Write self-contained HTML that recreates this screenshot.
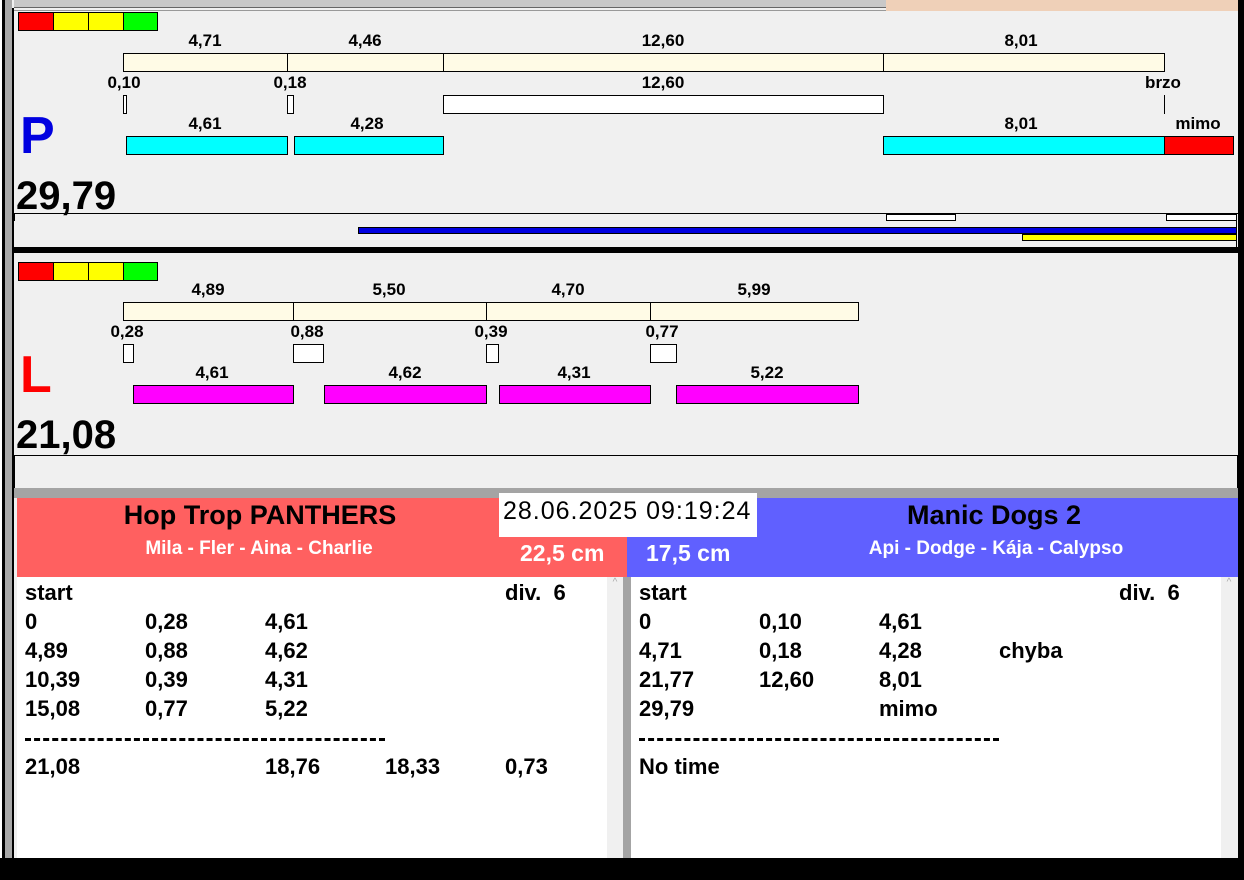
<!DOCTYPE html>
<html><head><meta charset="utf-8"><style>
*{margin:0;padding:0;box-sizing:border-box}
body{width:1244px;height:880px;background:#000;position:relative;overflow:hidden;font-family:"Liberation Sans",Arial,sans-serif}
div{position:absolute}
.t{font-weight:bold;font-size:17px;color:#000;transform:translateX(-50%);white-space:nowrap;line-height:17px}
.b{border:1px solid #000}
.r{font-weight:bold;font-size:22px;line-height:24px;color:#000;white-space:nowrap}
</style></head><body>
<div style="left:0;top:0;width:2px;height:858px;background:#fff"></div>
<div style="left:5px;top:0;width:8px;height:858px;background:#a8a8a8"></div>
<div style="left:12px;top:0;width:1226px;height:858px;background:#f0f0f0"></div>
<div style="left:12px;top:8px;width:2px;height:850px;background:#000"></div>
<div style="left:14px;top:0;width:872px;height:8px;background:#c8c8c8;border-bottom:1px solid #666"></div>
<div style="left:886px;top:0;width:352px;height:11px;background:#efd0b8"></div>
<div style="left:14px;top:10px;width:872px;height:1px;background:#999"></div>
<!-- P section -->
<div class="b" style="left:18px;top:12px;width:36px;height:19px;background:#f00"></div>
<div class="b" style="left:53px;top:12px;width:36px;height:19px;background:#ff0"></div>
<div class="b" style="left:88px;top:12px;width:36px;height:19px;background:#ff0"></div>
<div class="b" style="left:123px;top:12px;width:35px;height:19px;background:#0f0"></div>
<div class="t" style="left:205px;top:32px">4,71</div>
<div class="t" style="left:365px;top:32px">4,46</div>
<div class="t" style="left:663px;top:32px">12,60</div>
<div class="t" style="left:1021px;top:32px">8,01</div>
<div class="b" style="left:123px;top:53px;width:165px;height:19px;background:#fffbe6"></div>
<div class="b" style="left:287px;top:53px;width:157px;height:19px;background:#fffbe6"></div>
<div class="b" style="left:443px;top:53px;width:441px;height:19px;background:#fffbe6"></div>
<div class="b" style="left:883px;top:53px;width:282px;height:19px;background:#fffbe6"></div>
<div class="t" style="left:124px;top:74px">0,10</div>
<div class="t" style="left:290px;top:74px">0,18</div>
<div class="t" style="left:663px;top:74px">12,60</div>
<div class="t" style="left:1163px;top:74px">brzo</div>
<div class="b" style="left:123px;top:95px;width:4px;height:19px;background:#fff"></div>
<div class="b" style="left:287px;top:95px;width:7px;height:19px;background:#fff"></div>
<div class="b" style="left:443px;top:95px;width:441px;height:19px;background:#fff"></div>
<div style="left:1164px;top:95px;width:1px;height:19px;background:#000"></div>
<div style="left:20px;top:108px;font-size:52px;font-weight:bold;color:#0000e0;line-height:56px">P</div>
<div class="t" style="left:205px;top:115px">4,61</div>
<div class="t" style="left:367px;top:115px">4,28</div>
<div class="t" style="left:1021px;top:115px">8,01</div>
<div class="t" style="left:1198px;top:115px">mimo</div>
<div class="b" style="left:126px;top:136px;width:162px;height:19px;background:#0ff"></div>
<div class="b" style="left:294px;top:136px;width:150px;height:19px;background:#0ff"></div>
<div class="b" style="left:883px;top:136px;width:282px;height:19px;background:#0ff"></div>
<div class="b" style="left:1164px;top:136px;width:70px;height:19px;background:#f00"></div>
<div style="left:16px;top:174px;font-size:40px;font-weight:bold;line-height:44px">29,79</div>
<div style="left:14px;top:213px;width:1224px;height:1px;background:#000"></div>
<div style="left:14px;top:213px;width:1px;height:8px;background:#000"></div>
<div class="b" style="left:886px;top:214px;width:70px;height:7px;background:#fff"></div>
<div class="b" style="left:1166px;top:214px;width:71px;height:7px;background:#fff"></div>
<div class="b" style="left:358px;top:227px;width:879px;height:7px;background:#0000e0"></div>
<div class="b" style="left:1022px;top:234px;width:215px;height:7px;background:#ff0"></div>
<div style="left:1236px;top:213px;width:1px;height:34px;background:#000"></div>
<div style="left:12px;top:247px;width:1226px;height:6px;background:#000"></div>
<!-- L section -->
<div class="b" style="left:18px;top:262px;width:36px;height:19px;background:#f00"></div>
<div class="b" style="left:53px;top:262px;width:36px;height:19px;background:#ff0"></div>
<div class="b" style="left:88px;top:262px;width:36px;height:19px;background:#ff0"></div>
<div class="b" style="left:123px;top:262px;width:35px;height:19px;background:#0f0"></div>
<div class="t" style="left:208px;top:281px">4,89</div>
<div class="t" style="left:389px;top:281px">5,50</div>
<div class="t" style="left:568px;top:281px">4,70</div>
<div class="t" style="left:754px;top:281px">5,99</div>
<div class="b" style="left:123px;top:302px;width:171px;height:19px;background:#fffbe6"></div>
<div class="b" style="left:293px;top:302px;width:194px;height:19px;background:#fffbe6"></div>
<div class="b" style="left:486px;top:302px;width:165px;height:19px;background:#fffbe6"></div>
<div class="b" style="left:650px;top:302px;width:209px;height:19px;background:#fffbe6"></div>
<div class="t" style="left:127px;top:323px">0,28</div>
<div class="t" style="left:307px;top:323px">0,88</div>
<div class="t" style="left:491px;top:323px">0,39</div>
<div class="t" style="left:662px;top:323px">0,77</div>
<div class="b" style="left:123px;top:344px;width:11px;height:19px;background:#fff"></div>
<div class="b" style="left:293px;top:344px;width:31px;height:19px;background:#fff"></div>
<div class="b" style="left:486px;top:344px;width:13px;height:19px;background:#fff"></div>
<div class="b" style="left:650px;top:344px;width:27px;height:19px;background:#fff"></div>
<div style="left:20px;top:347px;font-size:52px;font-weight:bold;color:#f00;line-height:56px">L</div>
<div class="t" style="left:212px;top:364px">4,61</div>
<div class="t" style="left:405px;top:364px">4,62</div>
<div class="t" style="left:574px;top:364px">4,31</div>
<div class="t" style="left:767px;top:364px">5,22</div>
<div class="b" style="left:133px;top:385px;width:161px;height:19px;background:#f0f"></div>
<div class="b" style="left:324px;top:385px;width:163px;height:19px;background:#f0f"></div>
<div class="b" style="left:499px;top:385px;width:152px;height:19px;background:#f0f"></div>
<div class="b" style="left:676px;top:385px;width:183px;height:19px;background:#f0f"></div>
<div style="left:16px;top:413px;font-size:40px;font-weight:bold;line-height:44px">21,08</div>
<div class="b" style="left:14px;top:455px;width:1224px;height:34px;border-bottom:none"></div>
<div style="left:14px;top:488px;width:1224px;height:10px;background:#a4a4a4"></div>
<!-- headers -->
<div style="left:17px;top:498px;width:610px;height:79px;background:#ff6060"></div>
<div style="left:627px;top:498px;width:611px;height:79px;background:#6060ff"></div>
<div style="left:499px;top:493px;width:258px;height:44px;background:#fff"></div>
<div style="left:503px;top:496px;font-size:25px;letter-spacing:1px;line-height:30px;color:#000;white-space:nowrap">28.06.2025 09:19:24</div>
<div class="t" style="left:260px;top:501px;font-size:27px;line-height:28px">Hop Trop PANTHERS</div>
<div class="t" style="left:259px;top:538px;font-size:19px;line-height:22px;color:#fff">Mila - Fler - Aina - Charlie</div>
<div style="left:520px;top:540px;font-size:23px;font-weight:bold;color:#fff;line-height:26px">22,5 cm</div>
<div style="left:646px;top:540px;font-size:23px;font-weight:bold;color:#fff;line-height:26px">17,5 cm</div>
<div class="t" style="left:994px;top:501px;font-size:27px;line-height:28px">Manic Dogs 2</div>
<div class="t" style="left:996px;top:538px;font-size:19px;line-height:22px;color:#fff">Api - Dodge - Kája - Calypso</div>
<!-- lists -->
<div style="left:17px;top:577px;width:590px;height:281px;background:#fff"></div>
<div style="left:607px;top:577px;width:16px;height:281px;background:#f0f0f0;color:#aaa;font-size:10px;text-align:center">^</div>
<div style="left:623px;top:577px;width:8px;height:281px;background:#a4a4a4"></div>
<div style="left:631px;top:577px;width:590px;height:281px;background:#fff"></div>
<div style="left:1221px;top:577px;width:16px;height:281px;background:#f0f0f0;color:#aaa;font-size:10px;text-align:center">^</div>

<div class="r" style="left:25px;top:581px">start</div><div class="r" style="left:505px;top:581px">div.&nbsp; 6</div>
<div class="r" style="left:25px;top:610px">0</div><div class="r" style="left:145px;top:610px">0,28</div><div class="r" style="left:265px;top:610px">4,61</div>
<div class="r" style="left:25px;top:639px">4,89</div><div class="r" style="left:145px;top:639px">0,88</div><div class="r" style="left:265px;top:639px">4,62</div>
<div class="r" style="left:25px;top:668px">10,39</div><div class="r" style="left:145px;top:668px">0,39</div><div class="r" style="left:265px;top:668px">4,31</div>
<div class="r" style="left:25px;top:697px">15,08</div><div class="r" style="left:145px;top:697px">0,77</div><div class="r" style="left:265px;top:697px">5,22</div>
<div style="left:25px;top:738px;width:360px;height:3px;border-top:3px dashed #000"></div>
<div class="r" style="left:25px;top:755px">21,08</div><div class="r" style="left:265px;top:755px">18,76</div><div class="r" style="left:385px;top:755px">18,33</div><div class="r" style="left:505px;top:755px">0,73</div>

<div class="r" style="left:639px;top:581px">start</div><div class="r" style="left:1119px;top:581px">div.&nbsp; 6</div>
<div class="r" style="left:639px;top:610px">0</div><div class="r" style="left:759px;top:610px">0,10</div><div class="r" style="left:879px;top:610px">4,61</div>
<div class="r" style="left:639px;top:639px">4,71</div><div class="r" style="left:759px;top:639px">0,18</div><div class="r" style="left:879px;top:639px">4,28</div><div class="r" style="left:999px;top:639px">chyba</div>
<div class="r" style="left:639px;top:668px">21,77</div><div class="r" style="left:759px;top:668px">12,60</div><div class="r" style="left:879px;top:668px">8,01</div>
<div class="r" style="left:639px;top:697px">29,79</div><div class="r" style="left:879px;top:697px">mimo</div>
<div style="left:639px;top:738px;width:360px;height:3px;border-top:3px dashed #000"></div>
<div class="r" style="left:639px;top:755px">No time</div>
</body></html>
